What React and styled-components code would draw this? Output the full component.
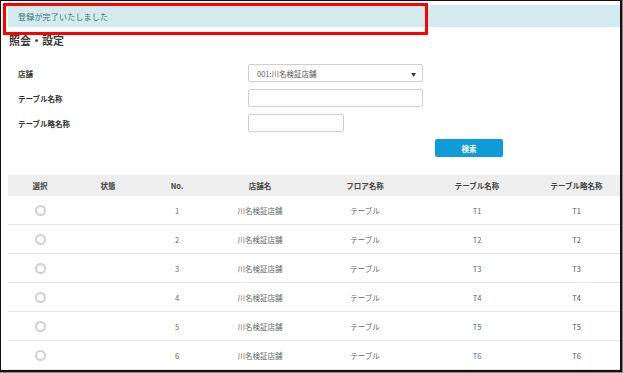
import React from "react";
import styled, { createGlobalStyle } from "styled-components";

const Global = createGlobalStyle`
  html, body { margin: 0; padding: 0; background: #8a8a8a; }
  body { font-family: "Noto Sans CJK JP", "Noto Sans", sans-serif; }
  * { box-sizing: border-box; }
`;

const Frame = styled.div`
  position: relative;
  width: 622px;
  height: 372px;
  background: #fff;
  border-style: solid;
  border-color: #111;
  border-width: 1px 2px 2px 1px;
  padding: 4px 0 0 7px;
  overflow: hidden;
  display: flex;
  flex-direction: column;
  & > * { flex-shrink: 0; }
`;

const Alert = styled.div`
  height: 22px;
  background: #d3ebef;
  color: #3f6d78;
  font-size: 8px;
  display: flex;
  align-items: center;
  padding-left: 10px;
  letter-spacing: 0.2px;
`;

const Highlight = styled.div`
  position: absolute;
  left: 2px;
  top: 2px;
  width: 425px;
  height: 32px;
  border: 3px solid #ff0000;
  pointer-events: none;
`;

const Title = styled.h1`
  margin: 6px 0 0 1px;
  font-size: 11px;
  line-height: 14px;
  font-weight: 700;
  color: #3a3a3a;
`;

const Form = styled.div`
  margin-top: 17px;
  padding-left: 10px;
  display: grid;
  grid-template-columns: 230px 1fr;
  grid-auto-rows: 18px;
  row-gap: 7px;
  align-items: center;
`;

const Label = styled.div`
  font-size: 7.5px;
  font-weight: 700;
  color: #333;
`;

const Field = styled.div`
  width: ${(p) => p.$w}px;
  height: 18px;
  border: 1px solid #cfcfcf;
  border-radius: 2px;
  background: #fff;
  display: flex;
  align-items: center;
  justify-content: space-between;
  padding: 0 6px 0 8px;
  font-size: 7.5px;
  color: #555;
`;

const Arrow = styled.span`
  font-size: 5px;
  color: #333;
`;

const ButtonRow = styled.div`
  grid-column: 1 / 3;
  padding-left: 417px;
`;

const Button = styled.button`
  display: block;
  width: 68px;
  height: 18px;
  border: none;
  border-radius: 2px;
  background: #0f9bd7;
  color: #fff;
  font-family: inherit;
  font-size: 7.5px;
  font-weight: 700;
  padding: 0;
`;

const Table = styled.div`
  margin-top: 18px;
  display: flex;
  flex-direction: column;
`;

const cols = "64px 72px 66px 100px 110px 114px 85px";

const Head = styled.div`
  display: grid;
  grid-template-columns: ${cols};
  height: 21px;
  flex-shrink: 0;
  background: #eeeeee;
  align-items: center;
  font-size: 7.5px;
  font-weight: 700;
  color: #444;
  text-align: center;
`;

const Row = styled.div`
  display: grid;
  grid-template-columns: ${cols};
  height: 29px;
  flex-shrink: 0;
  align-items: center;
  text-align: center;
  font-size: 7.5px;
  color: #666;
  border-bottom: 1px solid #e6e6e6;
`;

const Cell = styled.div`
  display: flex;
  justify-content: center;
  align-items: center;
  color: ${(p) => p.$c || "inherit"};
`;

const Radio = styled.span`
  display: block;
  flex-shrink: 0;
  width: 11px;
  height: 11px;
  border-radius: 50%;
  border: 2px solid #d0d0d0;
  background: #fff;
`;

const rows = [1, 2, 3, 4, 5, 6];

export default function App() {
  return (
    <>
      <Global />
      <Frame>
        <Alert>登録が完了いたしました</Alert>
        <Title>照会・設定</Title>
        <Form>
          <Label>店舗</Label>
          <Field $w={175}>
            <span>001:川名検証店舗</span>
            <Arrow>▼</Arrow>
          </Field>
          <Label>テーブル名称</Label>
          <Field $w={175} />
          <Label>テーブル略名称</Label>
          <Field $w={96} />
          <ButtonRow>
            <Button>検索</Button>
          </ButtonRow>
        </Form>
        <Table>
          <Head>
            <div>選択</div>
            <div>状態</div>
            <div>No.</div>
            <div>店舗名</div>
            <div>フロア名称</div>
            <div>テーブル名称</div>
            <div>テーブル略名称</div>
          </Head>
          {rows.map((n) => (
            <Row key={n}>
              <Cell><Radio /></Cell>
              <Cell />
              <Cell $c="#6a6a5a">{n}</Cell>
              <Cell>川名検証店舗</Cell>
              <Cell>テーブル</Cell>
              <Cell $c="#4a6a8a">T{n}</Cell>
              <Cell $c="#555">T{n}</Cell>
            </Row>
          ))}
        </Table>
        <Highlight />
      </Frame>
    </>
  );
}
